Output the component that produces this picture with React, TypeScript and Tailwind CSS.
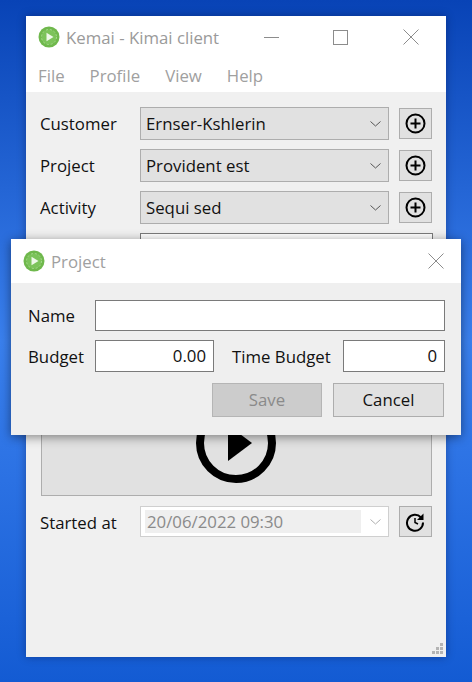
function Logo() {
  return (
    <svg width="22" height="22" viewBox="0 0 22 22" className="shrink-0">
      <circle cx="11" cy="11" r="10.5" fill="#6fb84c" />
      <circle cx="11" cy="11" r="7.5" fill="#7cc35a" stroke="#a5d98c" strokeWidth="1" strokeDasharray="2 2" />
      <path d="M8.5 6.8 L15.5 11 L8.5 15.2 Z" fill="#eef8e8" />
    </svg>
  );
}

function PlusIcon() {
  return (
    <svg width="21" height="21" viewBox="0 0 21 21" className="mr-px">
      <circle cx="10.5" cy="10.5" r="9" fill="none" stroke="#000" strokeWidth="2" />
      <path d="M10.5 5.5v10M5.5 10.5h10" stroke="#000" strokeWidth="2" />
    </svg>
  );
}

function Chevron({ color }: { color: string }) {
  return (
    <svg width="11" height="6" viewBox="0 0 11 6">
      <path d="M0.5 0.5L5.5 5L10.5 0.5" fill="none" stroke={color} strokeWidth="1" />
    </svg>
  );
}

function Combo({ value }: { value: string }) {
  return (
    <div className="flex h-[33px] w-[249px] items-center justify-between border border-[#adadad] bg-[#e1e1e1] pl-[5px] pr-[7px] text-[#111]">
      <span className="pt-[2px]">{value}</span>
      <Chevron color="#555" />
    </div>
  );
}

function Row({ label, value }: { label: string; value: string }) {
  return (
    <div className="flex h-[33px] items-center">
      <span className="w-[100px] pt-[2px] text-[#111]">{label}</span>
      <Combo value={value} />
      <button className="ml-[10px] flex h-[31px] w-[33px] items-center justify-center border border-[#adadad] bg-[#e1e1e1]">
        <PlusIcon />
      </button>
    </div>
  );
}

function TextBox({ value, className }: { value?: string; className: string }) {
  return (
    <div className={`flex items-center justify-end border border-[#7a7a7a] bg-white pr-[7px] pt-px text-[#111] ${className}`}>
      {value}
    </div>
  );
}

export default function App() {
  return (
    <div
      className="relative h-[682px] w-[472px] overflow-hidden bg-gradient-to-b from-[#0843b6] via-[#3a80ee] to-[#135bd3] text-[16.8px] leading-none"
      style={{ fontFamily: '"Open Sans", "Noto Sans", sans-serif' }}
    >
      {/* main window */}
      <div className="absolute left-[26px] top-[16px] flex h-[641px] w-[420px] flex-col bg-[#f0f0f0] shadow-[0_0_8px_rgba(0,0,40,0.35)]">
        <div className="bg-white">
          <div className="flex h-[42px] items-center pl-[12px] text-[#9a9a9a]">
            <Logo />
            <span className="ml-[6px] w-[179px] pt-[2px]">Kemai - Kimai client</span>
            <span className="ml-[19px] h-px w-[15px] bg-[#8c8c8c]" />
            <span className="ml-[54px] h-[15px] w-[15px] border border-[#8c8c8c]" />
            <svg width="16" height="16" viewBox="0 0 16 16" className="ml-[55px]">
              <path d="M0.5 0.5L15.5 15.5M15.5 0.5L0.5 15.5" stroke="#8c8c8c" strokeWidth="1" />
            </svg>
          </div>
          <div className="flex h-[34px] items-start gap-[25px] pl-[12px] pt-[10px] text-[#a0a0a0]">
            <span>File</span>
            <span>Profile</span>
            <span>View</span>
            <span>Help</span>
          </div>
        </div>

        <div className="relative flex flex-1 flex-col px-[14px] pt-[15px]">
          <div className="flex flex-col gap-[9px]">
            <Row label="Customer" value="Ernser-Kshlerin" />
            <Row label="Project" value="Provident est" />
            <Row label="Activity" value="Sequi sed" />
          </div>

          {/* description box, mostly behind the dialog */}
          <div className="ml-[100px] mr-[-1px] mt-[9px] h-[100px] border border-[#7a7a7a] bg-white" />

          <button className="ml-px mt-[8px] flex h-[155px] w-[391px] items-end justify-center border border-[#adadad] bg-[#e1e1e1] pb-[12px]">
            <svg width="80" height="80" viewBox="0 0 80 80" className="mr-[2px]">
              <circle cx="40" cy="40" r="36" fill="none" stroke="#000" strokeWidth="8" />
              <path d="M32 22L56 40L32 58Z" fill="#000" />
            </svg>
          </button>

          <div className="mt-[10px] flex h-[31px] items-center">
            <span className="w-[100px] pt-[3px] text-[#111]">Started at</span>
            <div className="flex h-[31px] w-[249px] items-center justify-between border border-[#cfcfcf] bg-white pl-[4px] pr-[7px]">
              <span className="flex h-[23px] w-[216px] items-center bg-[#efefef] pl-[2px] pt-[2px] text-[#8a8a8a]">20/06/2022 09:30</span>
              <Chevron color="#b0b0b0" />
            </div>
            <button className="ml-[10px] flex h-[31px] w-[33px] items-center justify-center border border-[#adadad] bg-[#e1e1e1]">
              <svg width="20" height="20" viewBox="0 0 20 20" fill="none" stroke="#000" strokeWidth="2" className="mr-[2px]">
                <path d="M16 5.5A8 8 0 1 0 18 10.5" />
                <path d="M10 6v4.5l3 1.5" strokeWidth="1.5" />
                <path d="M18.5 1.5V8H12Z" fill="#000" stroke="none" />
              </svg>
            </button>
          </div>

          {/* resize grip */}
          <svg width="12" height="12" viewBox="0 0 12 12" className="absolute bottom-[2px] right-[2px]" fill="#b4b4b4">
            <rect x="8" y="0" width="3" height="3" />
            <rect x="4" y="4" width="3" height="3" />
            <rect x="8" y="4" width="3" height="3" />
            <rect x="0" y="8" width="3" height="3" />
            <rect x="4" y="8" width="3" height="3" />
            <rect x="8" y="8" width="3" height="3" />
          </svg>
        </div>
      </div>

      {/* project dialog */}
      <div className="absolute left-[11px] top-[239px] flex h-[196px] w-[450px] flex-col bg-[#efefef] shadow-[0_2px_10px_rgba(0,0,0,0.45)]">
        <div className="flex h-[44px] items-center bg-white pl-[12px] pr-[17px] text-[#a0a0a0]">
          <Logo />
          <span className="ml-[6px] flex-1 pt-[2px]">Project</span>
          <svg width="16" height="16" viewBox="0 0 16 16">
            <path d="M0.5 0.5L15.5 15.5M15.5 0.5L0.5 15.5" stroke="#8c8c8c" strokeWidth="1" />
          </svg>
        </div>
        <div className="flex flex-col gap-[9px] pl-[17px] pr-[16px] pt-[17px] text-[#111]">
          <div className="flex items-center">
            <span className="w-[67px] pt-[2px]">Name</span>
            <TextBox className="h-[31px] flex-1" />
          </div>
          <div className="flex items-center">
            <span className="w-[67px] pt-[2px]">Budget</span>
            <TextBox value="0.00" className="h-[32px] w-[119px]" />
            <span className="ml-[18px] w-[111px] pt-[2px]">Time Budget</span>
            <TextBox value="0" className="h-[32px] flex-1" />
          </div>
          <div className="mr-px mt-[2px] flex justify-end gap-[11px]">
            <button className="h-[34px] w-[110px] border border-[#b5b5b5] bg-[#cccccc] pt-px text-[#8a8a8a]">Save</button>
            <button className="h-[34px] w-[111px] border border-[#adadad] bg-[#e1e1e1] pt-px text-[#111]">Cancel</button>
          </div>
        </div>
      </div>
    </div>
  );
}
